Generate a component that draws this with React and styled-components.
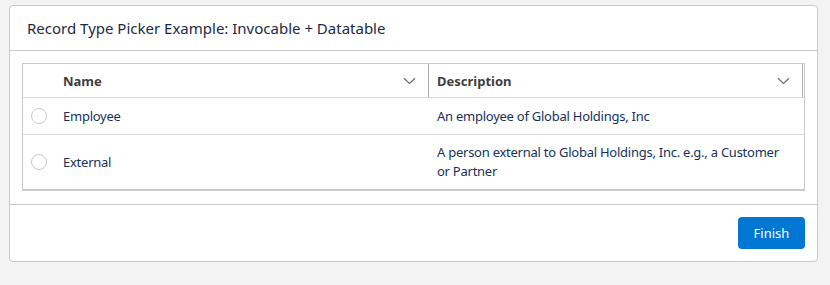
import React from 'react'
import styled, { createGlobalStyle } from 'styled-components'

const GlobalStyle = createGlobalStyle`
  body {
    margin: 0;
    background: #f3f3f3;
    font-family: "Noto Sans", "Open Sans", sans-serif;
  }
`

const Card = styled.div`
  margin: 5px 0 0 9px;
  width: 807px;
  background: #fff;
  border: 1px solid #c9c9c9;
  border-radius: 4px;
`

const CardHeader = styled.div`
  height: 44px;
  display: flex;
  align-items: center;
  padding: 0 17px;
  border-bottom: 1px solid #c9c9c9;
  font-size: 15px;
  color: #1b2a44;
`

const CardBody = styled.div`
  padding: 12px 12px 13px;
  border-bottom: 1px solid #c9c9c9;
`

const Table = styled.div`
  border: 1px solid #c9c9c9;
  border-bottom: 2px solid #c9c9c9;
`

const Row = styled.div`
  display: grid;
  grid-template-columns: 32px 374px 374px;
  align-items: ${p => (p.$head ? 'stretch' : 'center')};
  min-height: ${p => (p.$head ? '33px' : '36px')};
  border-top: ${p => (p.$first ? 'none' : '1px solid #d8d8d8')};
  font-size: 13px;
  letter-spacing: -0.25px;
  color: #16325c;
`

const HeadCell = styled.div`
  display: flex;
  align-items: center;
  justify-content: space-between;
  padding: 0 12px 0 8px;
  font-weight: 700;
  letter-spacing: 0;
  color: #3e3e3c;
  border-right: 1px solid #b0adab;
`

const Cell = styled.div`
  padding: 8px 20px 8px 8px;
  line-height: 19px;
`

const RadioCell = styled.div`
  display: flex;
  justify-content: center;
`

const Radio = styled.span`
  width: 14px;
  height: 14px;
  border: 1px solid #c9c9c9;
  border-radius: 50%;
  background: #fff;
`

const CardFooter = styled.div`
  display: flex;
  justify-content: flex-end;
  padding: 12px 12px 12px;
`

const Button = styled.button`
  width: 67px;
  height: 32px;
  border: none;
  border-radius: 4px;
  background: #0176d3;
  color: #fff;
  font-family: inherit;
  font-size: 13px;
`

const Chevron = () => (
  <svg width="13" height="8" viewBox="0 0 13 8">
    <path d="M1 1.2 L6.5 6.5 L12 1.2" fill="none" stroke="#706e6b" strokeWidth="1.2" />
  </svg>
)

const rows = [
  { name: 'Employee', desc: 'An employee of Global Holdings, Inc' },
  { name: 'External', desc: 'A person external to Global Holdings, Inc. e.g., a Customer or Partner' },
]

export default function App() {
  return (
    <>
      <GlobalStyle />
      <Card>
        <CardHeader>Record Type Picker Example: Invocable + Datatable</CardHeader>
        <CardBody>
          <Table>
            <Row $head $first>
              <div />
              <HeadCell>Name<Chevron /></HeadCell>
              <HeadCell>Description<Chevron /></HeadCell>
            </Row>
            {rows.map(r => (
              <Row key={r.name}>
                <RadioCell><Radio /></RadioCell>
                <Cell>{r.name}</Cell>
                <Cell>{r.desc}</Cell>
              </Row>
            ))}
          </Table>
        </CardBody>
        <CardFooter>
          <Button>Finish</Button>
        </CardFooter>
      </Card>
    </>
  )
}
